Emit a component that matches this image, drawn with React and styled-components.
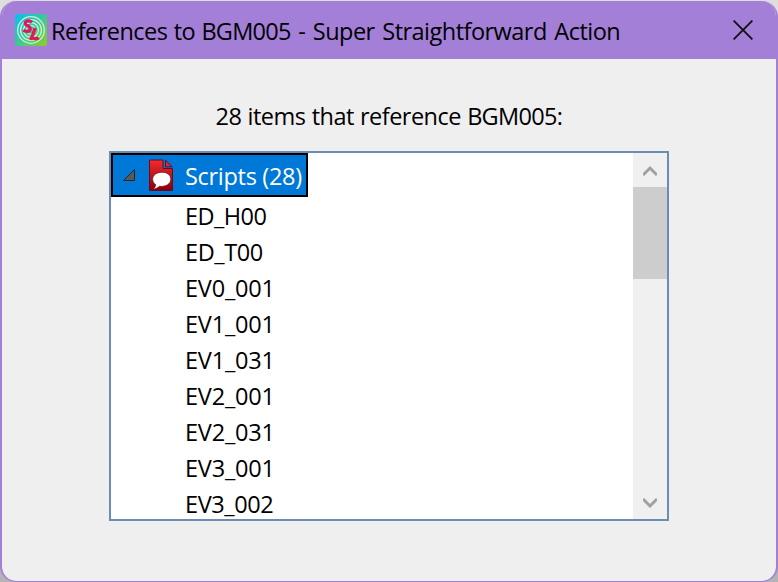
import React from "react";
import styled, { createGlobalStyle } from "styled-components";

const GlobalStyle = createGlobalStyle`
  * { box-sizing: border-box; }
  body {
    margin: 0;
    background: linear-gradient(#dedede, #b4b4b4);
    height: 582px;
    overflow: hidden;
    color: #000;
    font-family: "Open Sans", "Noto Sans", sans-serif;
    font-size: 23.5px;
  }
`;

const Window = styled.main`
  width: 778px;
  height: 581px;
  margin-top: 1px;
  display: flex;
  flex-direction: column;
  background: #efefef;
  border: 2px solid #a37fd8;
  border-top: 0;
  border-bottom-width: 1px;
  border-radius: 16px;
  overflow: hidden;
`;

const TitleBar = styled.header`
  height: 58px;
  flex: none;
  display: flex;
  align-items: center;
  background: #a37fd8;
  padding: 0 23px 0 13px;
`;

const Title = styled.h1`
  flex: 1;
  margin: 2px 0 0 4px;
  font-size: inherit;
  font-weight: 400;
  line-height: 32px;
  white-space: nowrap;
`;

const CloseButton = styled.button`
  border: 0;
  padding: 0;
  background: none;
  display: flex;
`;

const Body = styled.section`
  flex: 1;
  min-height: 0;
  display: flex;
  flex-direction: column;
  align-items: center;
  padding-top: 41px;
`;

const Caption = styled.p`
  width: 347px;
  margin: 0 0 19px;
  line-height: 32px;
  white-space: nowrap;
`;

const Spaced = styled.span`
  letter-spacing: ${(p) => p.$letter}px;
  word-spacing: ${(p) => p.$word || 0}px;
`;

const TreeBox = styled.div`
  width: 560px;
  height: 370px;
  display: flex;
  background: #fff;
  border: 2px solid #688eb3;
`;

const Tree = styled.div`
  flex: 1;
  min-width: 0;
  overflow: hidden;
`;

const Group = styled.div`
  width: 197px;
  height: 44px;
  display: flex;
  align-items: center;
  background: #0078d7;
  border: 2px solid #000;
  color: #fff;
  padding-left: 9px;
  white-space: nowrap;
`;

const ScriptIcon = styled.svg`
  margin: 0 11px 0 12px;
  flex: none;
`;

const GroupLabel = styled.span`
  line-height: 32px;
  padding-top: 2px;
`;

const Items = styled.ul`
  list-style: none;
  margin: 0;
  padding: 1px 0 0 74px;
`;

const Item = styled.li`
  height: 36px;
  line-height: 36px;
`;

const ScrollBar = styled.div`
  width: 34px;
  display: flex;
  flex-direction: column;
  background: #f0f0f0;
`;

const Arrow = styled.div`
  height: 34px;
  padding-top: 1px;
  display: flex;
  align-items: center;
  justify-content: center;
`;

const Track = styled.div`
  flex: 1;
`;

const Thumb = styled.div`
  height: 92px;
  background: #cdcdcd;
`;

const scripts = [
  ["ED_H00", -0.55], ["ED_T00", -0.4], ["EV0_001", -0.2], ["EV1_001", -0.2], ["EV1_031", -0.2],
  ["EV2_001", -0.2], ["EV2_031", -0.2], ["EV3_001", -0.2], ["EV3_002", -0.4],
];

function AppLogo() {
  return (
    <svg width="32" height="32" viewBox="0 0 32 32">
      <defs>
        <linearGradient id="logo" x1="0" y1="0" x2="1" y2="1">
          <stop offset="0" stopColor="#08bdf2" />
          <stop offset="0.5" stopColor="#3dc997" />
          <stop offset="1" stopColor="#8fd01c" />
        </linearGradient>
      </defs>
      <rect width="32" height="32" rx="3" fill="url(#logo)" />
      <g fill="none" stroke="#c9f2dd" strokeWidth="1.3">
        <circle cx="16" cy="16" r="13.3" />
        <circle cx="16" cy="16" r="10.4" />
        <circle cx="16" cy="16" r="7.4" />
        <circle cx="16" cy="16" r="4.4" />
      </g>
      <g fill="none" stroke="#e5145c" strokeWidth="3.2" strokeLinejoin="round">
        <path d="M17 8.2C14.8 6.2 10.5 6.5 10.2 9.2C10 12 15.8 11.7 15.2 14.9C14.7 18 10.5 17.9 8.4 16" />
        <path d="M20.3 14L17.5 21.6C17.1 23 15.8 24.6 15.8 24.6C18.5 22.7 20.5 26.6 23.7 23.7" />
      </g>
    </svg>
  );
}

export default function App() {
  return (
    <>
      <GlobalStyle />
      <Window>
        <TitleBar>
          <AppLogo />
          <Title>
            <Spaced $letter={-0.53} $word={0.7}>References to </Spaced>
            <Spaced $letter={-0.75}>BGM005</Spaced>
            <Spaced $letter={-0.52} $word={2}> - Super Straightforward Action</Spaced>
          </Title>
          <CloseButton aria-label="Close">
            <svg width="20" height="20" viewBox="0 0 20 20" fill="none" stroke="#111" strokeWidth="1.9">
              <path d="M.6.6L19.4 19.4M19.4.6L.6 19.4" />
            </svg>
          </CloseButton>
        </TitleBar>
        <Body>
          <Caption>
            <Spaced $letter={-0.53} $word={0.7}>28 items that reference </Spaced>
            <Spaced $letter={-0.7}>BGM005:</Spaced>
          </Caption>
          <TreeBox>
            <Tree>
              <Group>
                <svg width="14" height="14" viewBox="0 0 14 14">
                  <path d="M12.5 1.5V12.5H1.5Z" fill="#595959" stroke="#262626" />
                </svg>
                <ScriptIcon width="26" height="33" viewBox="0 0 26 33">
                  <defs>
                    <linearGradient id="doc" x1="0" y1="0" x2="0" y2="1">
                      <stop offset="0" stopColor="#f52b2e" />
                      <stop offset="1" stopColor="#870006" />
                    </linearGradient>
                  </defs>
                  <path d="M1.5 1H15V9.5H24.5V31.5H1.5Z" fill="url(#doc)" stroke="#650b20" strokeLinejoin="round" />
                  <path d="M17.5 1.2V7.8H24.2Z" fill="#e2262d" stroke="#650b20" strokeLinejoin="round" />
                  <path d="M14 13.2C8.5 13.2 4.6 16.3 4.6 20.3C4.6 22.7 5.9 24.6 7.8 25.8C7.5 27.3 6.6 28.8 5 30C8.1 29.9 10.1 28.7 11.4 27.3C18 28.1 22.8 24.9 22.8 20.3C22.8 16.3 19.4 13.2 14 13.2Z" fill="#fff" stroke="#73000c" strokeWidth=".7" />
                </ScriptIcon>
                <GroupLabel><Spaced $letter={-0.3}>Scripts (28)</Spaced></GroupLabel>
              </Group>
              <Items>
                {scripts.map(([name, letter]) => (
                  <Item key={name}><Spaced $letter={letter}>{name}</Spaced></Item>
                ))}
              </Items>
            </Tree>
            <ScrollBar>
              <Arrow>
                <svg width="14" height="12" viewBox="0 0 14 12" fill="none" stroke="#a0a0a0" strokeWidth="3">
                  <path d="M0 10L7 3L14 10" />
                </svg>
              </Arrow>
              <Track><Thumb /></Track>
              <Arrow>
                <svg width="14" height="12" viewBox="0 0 14 12" fill="none" stroke="#a0a0a0" strokeWidth="3">
                  <path d="M0 2L7 9L14 2" />
                </svg>
              </Arrow>
            </ScrollBar>
          </TreeBox>
        </Body>
      </Window>
    </>
  );
}
